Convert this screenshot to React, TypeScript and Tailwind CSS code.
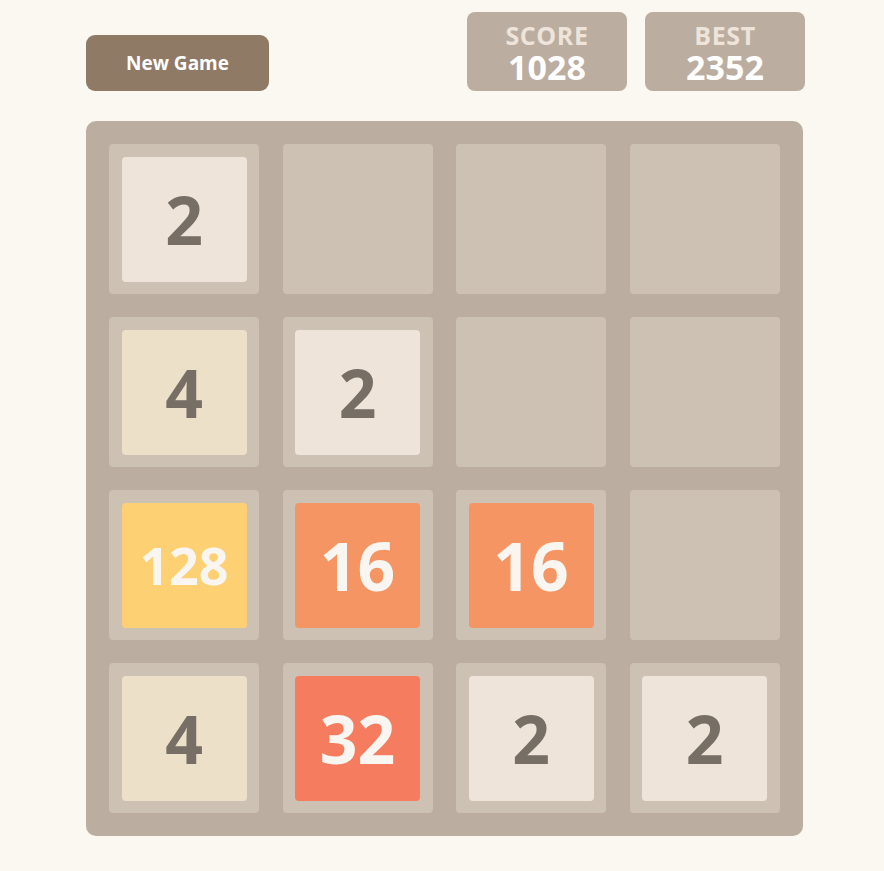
import React from "react";

type Tile = number | null;

const board: Tile[][] = [
  [2, null, null, null],
  [4, 2, null, null],
  [128, 16, 16, null],
  [4, 32, 2, 2],
];

// tile colours keyed by value
const tileStyle: Record<number, string> = {
  2: "bg-[#eee4da] text-[#776e65] text-[66px]",
  4: "bg-[#ede0c8] text-[#776e65] text-[66px]",
  8: "bg-[#f2b179] text-[#f9f6f2] text-[66px]",
  16: "bg-[#f59563] text-[#f9f6f2] text-[66px]",
  32: "bg-[#f67c5f] text-[#f9f6f2] text-[66px]",
  64: "bg-[#f65e3b] text-[#f9f6f2] text-[66px]",
  128: "bg-[#fdd074] text-[#f9f6f2] text-[52px]",
};

function ScoreBox({ label, value }: { label: string; value: number }) {
  return (
    <div className="flex h-[79px] w-[160px] flex-col items-center justify-center rounded-[8px] bg-[#bbada0] pt-[4px]">
      <span className="text-[25px] leading-[26px] font-bold tracking-wide text-[#eee4da]">{label}</span>
      <span className="text-[34px] leading-[38px] font-bold text-white">{value}</span>
    </div>
  );
}

export default function App() {
  return (
    <main
      className="min-h-screen bg-[#faf8f0]"
      style={{ fontFamily: '"Open Sans", "Noto Sans", sans-serif' }}
    >
      <div className="ml-[86px] w-[719px] pt-[12px]">
        <div className="flex items-end justify-between">
          <button className="h-[56px] w-[183px] rounded-[9px] bg-[#8f7a66] text-[19px] font-bold text-white">
            New Game
          </button>
          <div className="flex gap-[18px]">
            <ScoreBox label="SCORE" value={1028} />
            <ScoreBox label="BEST" value={2352} />
          </div>
        </div>

        <div className="mt-[30px] grid w-[717px] grid-cols-4 gap-[23px] rounded-[10px] bg-[#bbada0] p-[23px]">
          {board.flat().map((v, i) => (
            <div key={i} className="flex h-[150px] w-[150px] items-center justify-center rounded-[4px] bg-[#cdc1b4]">
              {v !== null && (
                <div
                  className={`flex h-[125px] w-[125px] items-center justify-center rounded-[4px] font-bold leading-none ${tileStyle[v]}`}
                >
                  {v}
                </div>
              )}
            </div>
          ))}
        </div>
      </div>
    </main>
  );
}
